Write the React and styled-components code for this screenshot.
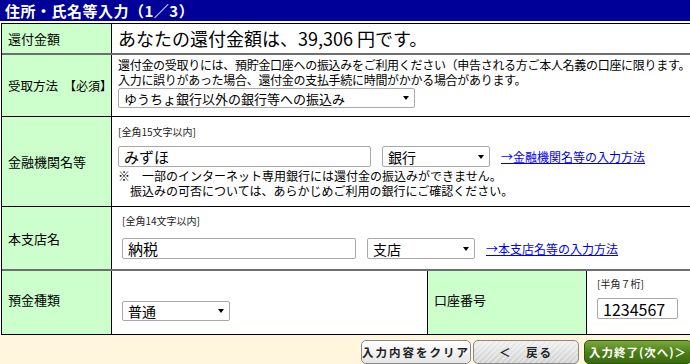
import React from "react";
import styled, { createGlobalStyle } from "styled-components";

const GlobalStyle = createGlobalStyle`
  html, body {
    margin: 0;
    padding: 0;
    background: #fff;
    overflow: hidden;
  }
  body {
    font-family: "Noto Sans CJK JP", "Noto Sans", sans-serif;
    color: #000;
  }
`;

const Page = styled.div`
  width: 700px;
  height: 364px;
  overflow: hidden;
`;

const TitleBar = styled.h1`
  margin: 0;
  height: 21px;
  background: #000099;
  color: #fff;
  font-size: 15px;
  font-weight: 700;
  line-height: 21px;
  padding-left: 5px;
  letter-spacing: 0.5px;
`;

const Table = styled.div`
  margin: 2px 0 0 1px;
  border-top: 1px solid #000;
  border-left: 1px solid #000;
`;

const Row = styled.div`
  display: grid;
  grid-template-columns: ${(p) => p.$cols || "110px 1fr"};
  height: ${(p) => p.$h}px;
  border-bottom: ${(p) => (p.$soft ? "2px solid #6e6e6e" : "1px solid #000")};
`;

const Label = styled.div`
  background: #ccffcc;
  border-right: 1px solid #000;
  border-left: ${(p) => (p.$inner ? "1px solid #000" : "none")};
  display: flex;
  align-items: center;
  padding: 0 0 ${(p) => p.$lift || 0}px 6px;
  font-size: 13px;
  white-space: nowrap;
`;

const Required = styled.span`
  font-size: 12px;
  margin-left: 6px;
`;

const LabelText = styled.span`
  font-size: ${(p) => p.$fs || 13}px;
`;

const Cell = styled.div`
  display: flex;
  flex-direction: column;
  padding: ${(p) => p.$pad || "4px 6px"};
  gap: ${(p) => p.$gap || 0}px;
  overflow: hidden;
  min-width: 0;
`;

const Amount = styled.div`
  font-size: 18px;
  line-height: 26px;
  white-space: nowrap;
`;

const Note = styled.p`
  margin: 0;
  font-size: 12px;
  line-height: ${(p) => p.$lh || 15}px;
  white-space: pre;
  letter-spacing: ${(p) => (p.$tight ? "-0.3px" : "0")};
`;

const Hint = styled.div`
  font-size: 10px;
  line-height: 12px;
  color: #222;
  white-space: nowrap;
`;

const FieldLine = styled.div`
  display: flex;
  align-items: center;
  gap: ${(p) => p.$gap || 10}px;
  margin-top: ${(p) => p.$top || 0}px;
`;

const TextInput = styled.input`
  box-sizing: border-box;
  width: ${(p) => p.$w}px;
  height: 21px;
  border: 1px solid #a9a9a9;
  border-radius: 2px;
  padding: 0 5px;
  font-family: inherit;
  font-size: ${(p) => p.$fs || 15}px;
  color: #000;
  background: #fff;
  outline: none;
`;

const SelectBox = styled.div`
  box-sizing: border-box;
  width: ${(p) => p.$w}px;
  height: ${(p) => p.$h || 21}px;
  border: 1px solid #a9a9a9;
  border-radius: 2px;
  background: #fff;
  display: flex;
  align-items: center;
  justify-content: space-between;
  padding: 0 5px;
  font-size: ${(p) => p.$fs || 14}px;
  white-space: nowrap;
`;

const Arrow = styled.span`
  width: 0;
  height: 0;
  border-left: 3px solid transparent;
  border-right: 3px solid transparent;
  border-top: 4px solid #000;
`;

const GuideLink = styled.a`
  font-size: 12px;
  color: #0000ee;
  text-decoration: underline;
  white-space: nowrap;
  cursor: pointer;
`;

const Footer = styled.div`
  height: 33px;
  background: #fff6dd;
  display: flex;
  align-items: center;
  padding-left: 361px;
  gap: 2px;
`;

const Button = styled.button`
  box-sizing: border-box;
  height: 24px;
  width: ${(p) => p.$w}px;
  border-radius: 5px;
  font-family: inherit;
  font-size: 11.5px;
  font-weight: 700;
  letter-spacing: 2px;
  padding: 0;
  white-space: nowrap;
  cursor: pointer;
  ${(p) =>
    p.$variant === "next"
      ? `
    margin-left: 3px;
    color: #fff;
    border: 1px solid #2f5a0c;
    background: linear-gradient(#7aa83c, #4a7d18 55%, #3b6a0f);
    letter-spacing: 1px;
  `
      : p.$variant === "back"
      ? `
    color: #222;
    border: 1px solid #8a8a8a;
    background:
      repeating-linear-gradient(135deg, rgba(255,255,255,0.35) 0 2px, transparent 2px 4px),
      linear-gradient(#eeeeee, #cfcfcf);
  `
      : `
    color: #222;
    border: 1px solid #8a8a8a;
    background: linear-gradient(#ffffff, #e6e6e6);
  `}
`;

export default function App() {
  return (
    <Page>
      <GlobalStyle />
      <TitleBar>住所・氏名等入力（1／3）</TitleBar>
      <Table>
        <Row $h={29} $soft>
          <Label>還付金額</Label>
          <Cell $pad="1px 6px">
            <Amount>あなたの還付金額は、39,306 円です。</Amount>
          </Cell>
        </Row>
        <Row $h={61}>
          <Label>
            <LabelText $fs={12.5}>受取方法</LabelText>
            <Required>【必須】</Required>
          </Label>
          <Cell $pad="2px 6px" $gap={1}>
            <Note $tight>
              {"還付金の受取りには、預貯金口座への振込みをご利用ください（申告される方ご本人名義の口座に限ります。\n入力に誤りがあった場合、還付金の支払手続に時間がかかる場合があります。"}
            </Note>
            <SelectBox $w={297} $h={20} $fs={13}>
              ゆうちょ銀行以外の銀行等への振込み
              <Arrow />
            </SelectBox>
          </Cell>
        </Row>
        <Row $h={89}>
          <Label>金融機関名等</Label>
          <Cell $pad="9px 6px 0" $gap={2}>
            <Hint>[全角15文字以内]</Hint>
            <FieldLine $gap={11} $top={6}>
              <TextInput $w={253} defaultValue="みずほ" />
              <SelectBox $w={108}>
                銀行
                <Arrow />
              </SelectBox>
              <GuideLink>→金融機関名等の入力方法</GuideLink>
            </FieldLine>
            <Note $lh={14.5}>
              {"※　一部のインターネット専用銀行には還付金の振込みができません。\n　振込みの可否については、あらかじめご利用の銀行にご確認ください。"}
            </Note>
          </Cell>
        </Row>
        <Row $h={62} $soft>
          <Label>本支店名</Label>
          <Cell $pad="8px 10px 0" $gap={11}>
            <Hint>[全角14文字以内]</Hint>
            <FieldLine $gap={11}>
              <TextInput $w={234} defaultValue="納税" />
              <SelectBox $w={108}>
                支店
                <Arrow />
              </SelectBox>
              <GuideLink>→本支店名等の入力方法</GuideLink>
            </FieldLine>
          </Cell>
        </Row>
        <Row $h={63} $cols="110px 315px 160px 1fr">
          <Label $lift={6}>預金種類</Label>
          <Cell $pad="30px 10px 0">
            <SelectBox $w={108} $h={20}>
              普通
              <Arrow />
            </SelectBox>
          </Cell>
          <Label $inner $lift={6}>口座番号</Label>
          <Cell $pad="7px 10px 0" $gap={8}>
            <Hint>[半角７桁]</Hint>
            <TextInput $w={81} $fs={16} defaultValue="1234567" />
          </Cell>
        </Row>
      </Table>
      <Footer>
        <Button $w={110}>入力内容をクリア</Button>
        <Button $w={106} $variant="back">＜　戻る</Button>
        <Button $w={108} $variant="next">入力終了(次へ)＞</Button>
      </Footer>
    </Page>
  );
}
